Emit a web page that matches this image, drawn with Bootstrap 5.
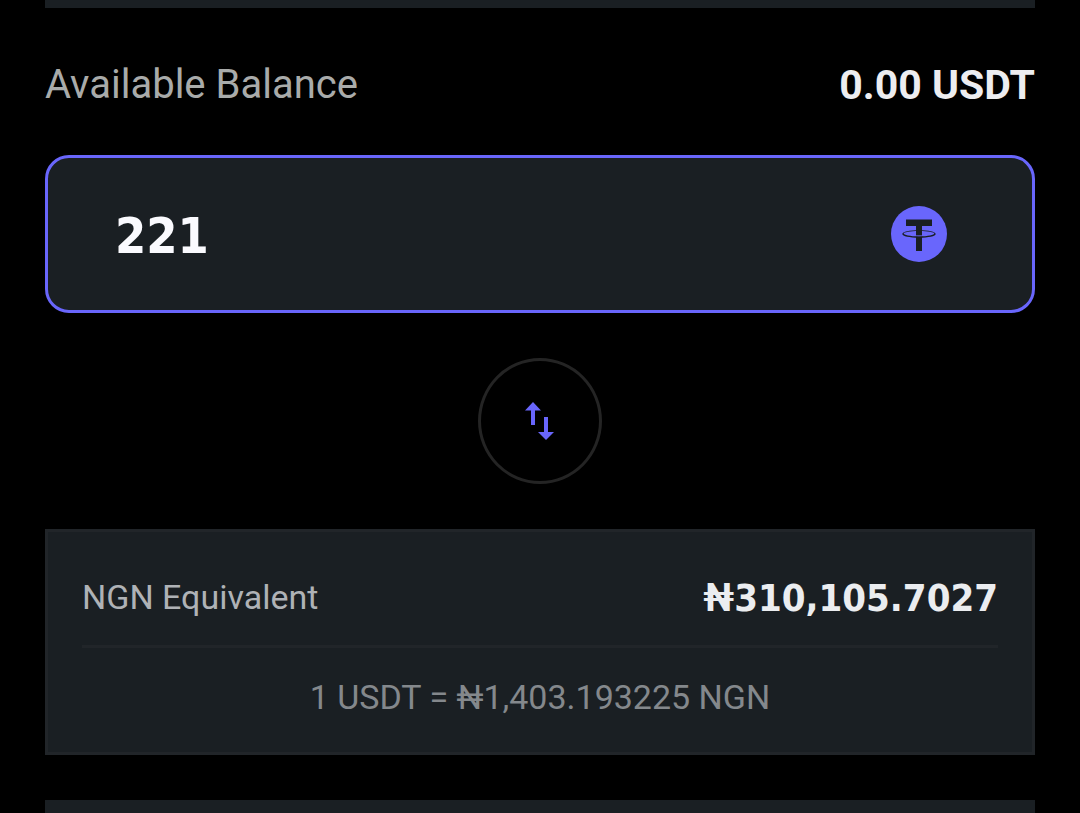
<!DOCTYPE html>
<html lang="en">
<head>
<meta charset="utf-8">
<meta name="viewport" content="width=device-width, initial-scale=1">
<title>Convert USDT</title>
<link rel="stylesheet" href="https://cdn.jsdelivr.net/npm/bootstrap@5.3.0/dist/css/bootstrap.min.css">
<style>
  :root { --accent: #6966fc; --panel: #1a1f23; --edge: #212529; --gap: 45px; --figures: "DejaVu Sans Condensed", "DejaVu Sans", sans-serif; }
  body { background: #000; color: #ededf0; font-family: Roboto, "Noto Sans", sans-serif; overflow-x: hidden; }
  .page { padding: 0 var(--gap); overflow: hidden; height: 100vh; }
  .strip { background: var(--panel); height: 8px; flex: none; }
  .strip-end { height: 96px; }
  .balance { padding: 47px 0 40px; font-size: 40px; line-height: 60px; }
  .balance-label { color: #a9abaa; }
  .balance-value { font-size: 41px; }
  .amount { background: var(--panel); border: 3px solid var(--accent); border-radius: 24px; height: 158px; padding: 0 85px 0 67px; flex: none; }
  .amount-field { color: #fafafe; font-family: var(--figures); font-size: 50px; line-height: 72px; font-weight: 700; outline: 0; min-width: 0; padding: 4px 0 0; }
  .swap { width: 124px; height: 126px; background: #000; border: 3px solid #242424; margin: var(--gap) 0; flex: none; }
  .quote { background: var(--panel); border: 3px solid var(--edge); padding: 35px 34px 30px; margin-bottom: var(--gap); }
  .quote-row { line-height: 60px; padding-bottom: 18px; border-bottom: 3px solid var(--edge); height: 81px; }
  .quote-label { color: #afb2b6; font-size: 34px; }
  .quote-value { font-family: var(--figures); font-size: 38px; line-height: 62px; color: #ebedf0; }
  .currency-sign { font-family: Roboto, "Noto Sans", sans-serif; }
  .quote-rate { color: #84888c; font-size: 34px; line-height: 50px; padding-top: 24px; }
</style>
</head>
<body>
<main class="page d-flex flex-column">
  <div class="strip"></div>
  <div class="balance d-flex justify-content-between">
    <span class="balance-label">Available Balance</span>
    <span class="balance-value fw-bold">0.00 USDT</span>
  </div>
  <div class="amount d-flex align-items-center">
    <input class="amount-field flex-grow-1 bg-transparent border-0" type="text" inputmode="decimal" value="221" aria-label="Amount in USDT">
    <svg width="56" height="56" viewBox="0 0 56 56" role="img" aria-label="USDT">
      <circle cx="28" cy="28" r="28" fill="#6966fc"/>
      <path d="M15 13.500h26v6.500H31v25h-6V20H15z" fill="#1a1f23"/>
      <path d="M25 30h6" stroke="#6966fc" stroke-width="1.200"/>
      <path fill="#1a1f23" fill-rule="evenodd" d="M28 24.300c9.500 0 16.700 1.500 16.700 3.700S37.500 31.700 28 31.700s-16.700-1.500-16.700-3.700 7.200-3.700 16.700-3.700zm0 .8c-9 0-15.300 1.200-15.300 2.500S19 30.500 28 30.500s15.300-1.600 15.300-2.900S37 25.100 28 25.100z"/>
    </svg>
  </div>
  <button class="swap btn rounded-circle p-0 d-flex align-items-center justify-content-center align-self-center" type="button" aria-label="Swap currencies">
    <svg width="30" height="38" viewBox="0 0 30 38" fill="#6966fc" aria-hidden="true">
      <path d="M8 0L16 8.500h-6V23H6V8.500H0z"/>
      <path d="M19 15h4v15h6L21 38 13 30h6z"/>
    </svg>
  </button>
  <section class="quote">
    <div class="quote-row d-flex justify-content-between">
      <span class="quote-label">NGN Equivalent</span>
      <span class="quote-value fw-bold"><span class="currency-sign">₦</span>310,105.7027</span>
    </div>
    <div class="quote-rate text-center">1 USDT = ₦1,403.193225 NGN</div>
  </section>
  <div class="strip strip-end"></div>
</main>
<script src="https://cdn.jsdelivr.net/npm/bootstrap@5.3.0/dist/js/bootstrap.bundle.min.js"></script>
</body>
</html>
